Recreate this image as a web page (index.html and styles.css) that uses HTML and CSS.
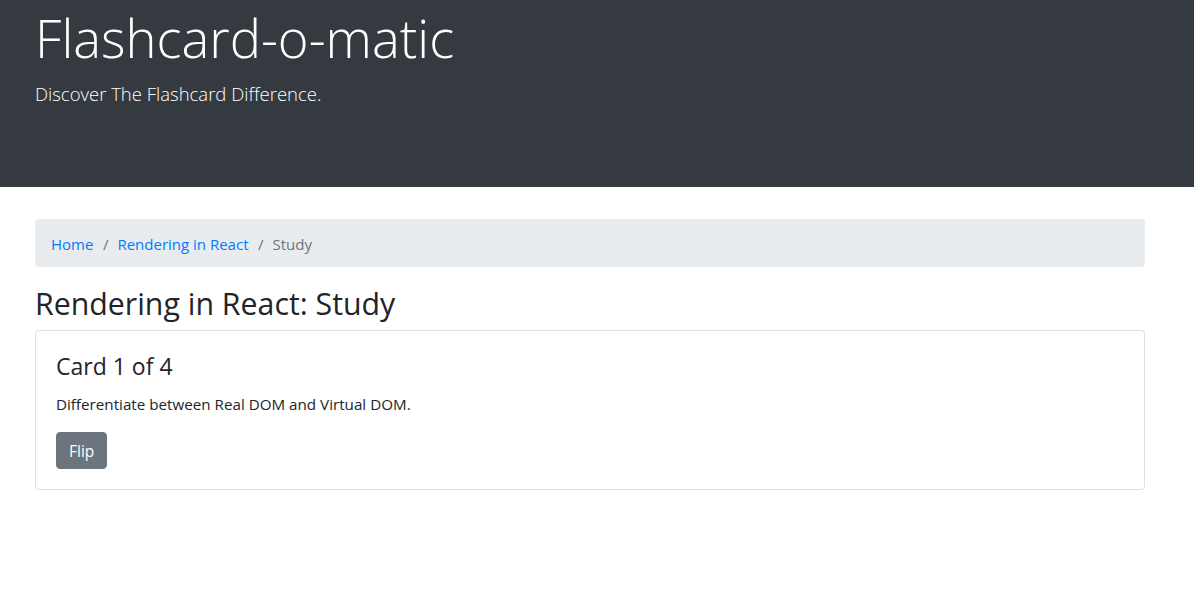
FILE: index.html
```html
<!DOCTYPE html>
<html lang="en">
<head>
<meta charset="utf-8">
<title>Flashcard-o-matic</title>
<link rel="stylesheet" href="styles.css">
</head>
<body>
<header class="jumbotron">
  <div class="container">
    <h1 class="display">Flashcard-o-matic</h1>
    <p class="lead">Discover The Flashcard Difference.</p>
  </div>
</header>
<main class="container">
  <nav class="breadcrumb">
    <a class="crumb link" href="#">Home</a>
    <span class="sep">/</span>
    <a class="crumb link" href="#">Rendering in React</a>
    <span class="sep">/</span>
    <span class="crumb active">Study</span>
  </nav>
  <h2 class="page-title">Rendering in React: Study</h2>
  <section class="card">
    <div class="card-body">
      <h4 class="card-title">Card 1 of 4</h4>
      <p class="card-text">Differentiate between Real DOM and Virtual DOM.</p>
      <button class="btn">Flip</button>
    </div>
  </section>
</main>
</body>
</html>
```
FILE: styles.css
```css
* { box-sizing: border-box; }
html, body { margin: 0; padding: 0; }
body {
  font-family: "Open Sans", "Noto Sans", sans-serif;
  font-size: 16px;
  line-height: 1.5;
  color: #212529;
  background: #fff;
}
.container {
  width: 1110px;
  margin-left: 35px;
}
.jumbotron {
  background: #343a40;
  color: #fff;
  height: 187px;
  margin-bottom: 32px;
  padding-top: 4px;
}
.display {
  margin: 0 0 8px;
  font-size: 52.5px;
  font-weight: 300;
  line-height: 67px;
}
.lead {
  margin: 0;
  font-size: 18.5px;
  font-weight: 300;
  line-height: 30px;
}
.breadcrumb {
  display: flex;
  align-items: center;
  background: #e9ecef;
  border-radius: 4px;
  padding: 13px 16px 11px;
  margin-bottom: 16px;
  height: 48px;
  font-size: 15px;
}
.link { color: #007bff; text-decoration: none; }
.sep { color: #6c757d; padding: 0 9px 0 9.5px; }
.active { color: #6c757d; }
.page-title {
  margin: 0 0 8px;
  padding-top: 2px;
  font-size: 30.3px;
  font-weight: 400;
  line-height: 37px;
}
.card {
  border: 1px solid rgba(0,0,0,.125);
  border-radius: 4px;
}
.card-body { padding: 20px; }
.card-title {
  margin: 0 0 12px;
  padding-top: 1px;
  font-size: 23px;
  font-weight: 400;
  line-height: 29px;
}
.card-text { margin: 0 0 16px; font-size: 15.2px; }
.btn {
  font-family: inherit;
  font-size: 15.5px;
  line-height: 24px;
  color: #fff;
  background: #6c757d;
  border: 1px solid #6c757d;
  border-radius: 4px;
  padding: 6px 12px;
  height: 37px;
  width: 51px;
}
```
